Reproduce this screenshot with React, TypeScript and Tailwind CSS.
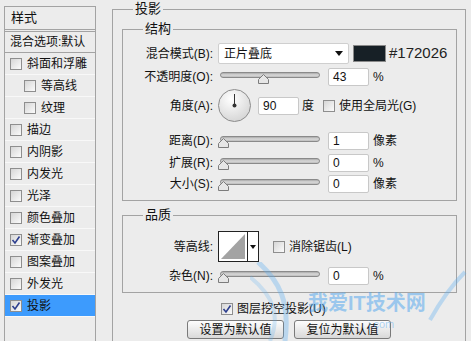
import React from 'react';

const FONT = "font-['Liberation_Sans','Noto_Sans_CJK_SC',sans-serif]";

interface StyleItem {
  label: string;
  indent?: boolean;
  checked?: boolean;
  active?: boolean;
}

const styleItems: StyleItem[] = [
  { label: '斜面和浮雕' },
  { label: '等高线', indent: true },
  { label: '纹理', indent: true },
  { label: '描边' },
  { label: '内阴影' },
  { label: '内发光' },
  { label: '光泽' },
  { label: '颜色叠加' },
  { label: '渐变叠加', checked: true },
  { label: '图案叠加' },
  { label: '外发光' },
  { label: '投影', checked: true, active: true },
];

function CheckBox({ checked = false }: { checked?: boolean }) {
  return (
    <div className="w-[12px] h-[12px] shrink-0 border border-[#8e8e8e] bg-gradient-to-br from-[#d6d6d6] to-[#fbfbfb] flex items-center justify-center">
      {checked && (
        <svg width="10" height="10" viewBox="0 0 10 10">
          <path d="M1.5 5 L4 8 L8.5 1.5" fill="none" stroke="#2d3f8e" strokeWidth="1.6" />
        </svg>
      )}
    </div>
  );
}

function Slider({ value }: { value: number }) {
  return (
    <div className="relative w-[102px] h-[14px] shrink-0">
      <div className="absolute left-[2px] right-0 top-[2px] h-[6px] rounded-full border border-[#8a8a8a] bg-gradient-to-b from-[#a9a9a9] via-[#d9d9d9] to-[#bdbdbd]" />
      {/* thumb */}
      <svg
        className="absolute top-[4px]"
        style={{ left: `${value}px` }}
        width="11"
        height="10"
        viewBox="0 0 11 10"
      >
        <path d="M0.5 9.5 L0.5 5.5 L5.5 0.5 L10.5 5.5 L10.5 9.5 Z" fill="#e6e6e6" stroke="#7c7c7c" />
      </svg>
    </div>
  );
}

function NumInput({ value, w = 'w-[41px]' }: { value: string; w?: string }) {
  return (
    <div className={`${w} h-[18px] shrink-0 bg-white border border-[#c8c8c8] rounded-[2px] flex items-center pl-[4px] text-[12px] text-[#111]`}>
      {value}
    </div>
  );
}

function Label({ children }: { children: React.ReactNode }) {
  return <div className="w-[90px] shrink-0 text-right text-[12px] text-[#111] whitespace-nowrap">{children}</div>;
}

function Group({ title, className, children }: { title: string; className?: string; children: React.ReactNode }) {
  return (
    <div className={`relative border border-[#a3a3a3] ${className ?? ''}`}>
      <span className="absolute -top-[9px] left-[20px] bg-[#ececec] px-[2px] text-[13px] leading-[16px] text-[#111]">{title}</span>
      {children}
    </div>
  );
}

function Button({ children }: { children: React.ReactNode }) {
  return (
    <div className="w-[97px] h-[19px] border border-[#7a7a7a] rounded-[3px] bg-gradient-to-b from-[#fdfdfd] to-[#d9d9d9] flex items-center justify-center text-[12px] text-[#111]">
      {children}
    </div>
  );
}

export default function App() {
  return (
    <div className={`relative w-[471px] h-[341px] overflow-hidden bg-[#ececec] flex items-start ${FONT}`}>
      {/* style list */}
      <div className="ml-[4px] mt-[6px] w-[92px] h-[340px] border border-[#a3a3a3] shrink-0">
        <div className="h-[23px] border-b border-[#a3a3a3] pl-[6px] flex items-center text-[13px] text-[#111]">样式</div>
        <div className="mt-[1px] h-[22px] border-t border-b border-[#a3a3a3] pl-[5px] flex items-center text-[12px] text-[#111] whitespace-nowrap">
          混合选项:默认
        </div>
        {styleItems.map((it) => (
          <div
            key={it.label}
            className={`h-[22px] flex items-center gap-[5px] border-b border-[#f8f8f8] text-[12px] text-[#111] ${it.indent ? 'pl-[19px]' : 'pl-[5px]'} ${it.active ? 'bg-[#3d9bfd]' : ''}`}
          >
            <CheckBox checked={it.checked} />
            <span>{it.label}</span>
          </div>
        ))}
      </div>

      {/* drop shadow settings */}
      <Group title="投影" className="ml-[16px] mt-[9px] w-[354px] h-[340px] pt-[19px] pl-[9px]">
        <Group title="结构" className="w-[335px] h-[172px] flex flex-col">
          <div className="mt-[13px] h-[21px] flex items-center">
            <Label>混合模式(B):</Label>
            <div className="ml-[5px] w-[131px] h-[21px] bg-white border border-[#cfcfcf] rounded-[2px] flex items-center justify-between pl-[5px] pr-[5px] text-[12px] text-[#111]">
              <span>正片叠底</span>
              <svg width="8" height="5" viewBox="0 0 8 5">
                <path d="M0 0 L8 0 L4 5 Z" fill="#111" />
              </svg>
            </div>
            <div className="ml-[4px] w-[33px] h-[17px] border border-[#8a8a8a] bg-[#172026]" />
            <span className="ml-[3px] font-['Liberation_Sans',sans-serif] text-[15px] text-[#222]">#172026</span>
          </div>
          <div className="mt-[2px] h-[22px] flex items-center">
            <Label>不透明度(O):</Label>
            <div className="ml-[5px]"><Slider value={40} /></div>
            <div className="ml-[8px]"><NumInput value="43" /></div>
            <span className="ml-[4px] text-[12px] text-[#111]">%</span>
          </div>
          <div className="mt-[1px] h-[33px] flex items-center">
            <Label>角度(A):</Label>
            <svg className="ml-[5px] shrink-0" width="33" height="33" viewBox="0 0 33 33">
              <defs>
                <radialGradient id="dial" cx="40%" cy="30%" r="75%">
                  <stop offset="0%" stopColor="#ffffff" />
                  <stop offset="100%" stopColor="#d4d4d4" />
                </radialGradient>
              </defs>
              <circle cx="16.5" cy="16.5" r="16" fill="url(#dial)" stroke="#8c8c8c" />
              <line x1="16.5" y1="16.5" x2="16.5" y2="5" stroke="#333" strokeWidth="1" />
              <circle cx="16.5" cy="16.5" r="2" fill="#333" />
            </svg>
            <div className="ml-[7px]"><NumInput value="90" /></div>
            <span className="ml-[3px] text-[12px] text-[#111]">度</span>
            <div className="ml-[9px] flex items-center gap-[4px] text-[12px] text-[#111] whitespace-nowrap">
              <CheckBox />
              <span>使用全局光(G)</span>
            </div>
          </div>
          <div className="mt-[8px] h-[22px] flex items-center">
            <Label>距离(D):</Label>
            <div className="ml-[5px]"><Slider value={0} /></div>
            <div className="ml-[8px]"><NumInput value="1" /></div>
            <span className="ml-[4px] text-[12px] text-[#111]">像素</span>
          </div>
          <div className="h-[21px] flex items-center">
            <Label>扩展(R):</Label>
            <div className="ml-[5px]"><Slider value={0} /></div>
            <div className="ml-[8px]"><NumInput value="0" /></div>
            <span className="ml-[4px] text-[12px] text-[#111]">%</span>
          </div>
          <div className="h-[22px] flex items-center">
            <Label>大小(S):</Label>
            <div className="ml-[5px]"><Slider value={0} /></div>
            <div className="ml-[8px]"><NumInput value="0" /></div>
            <span className="ml-[4px] text-[12px] text-[#111]">像素</span>
          </div>
        </Group>

        <Group title="品质" className="mt-[14px] w-[335px] h-[78px] flex flex-col">
          <div className="mt-[15px] h-[31px] flex items-center">
            <Label>等高线:</Label>
            <div className="ml-[5px] w-[41px] h-[31px] border border-[#222] bg-white flex">
              <svg width="28" height="29" viewBox="0 0 28 29" className="shrink-0">
                <path d="M2 27 L26 2 L26 27 Z" fill="#a3a3a3" />
              </svg>
              <div className="w-[11px] h-full border-l border-[#222] flex items-center justify-center">
                <svg width="6" height="4" viewBox="0 0 6 4">
                  <path d="M0 0 L6 0 L3 4 Z" fill="#111" />
                </svg>
              </div>
            </div>
            <div className="ml-[14px] flex items-center gap-[4px] text-[12px] text-[#111] whitespace-nowrap">
              <CheckBox />
              <span>消除锯齿(L)</span>
            </div>
          </div>
          <div className="mt-[5px] h-[18px] flex items-center">
            <Label>杂色(N):</Label>
            <div className="ml-[5px]"><Slider value={0} /></div>
            <div className="ml-[8px]"><NumInput value="0" /></div>
            <span className="ml-[4px] text-[12px] text-[#111]">%</span>
          </div>
        </Group>

        <div className="mt-[7px] ml-[99px] flex items-center gap-[4px] text-[12px] text-[#111] whitespace-nowrap">
          <CheckBox checked />
          <span>图层挖空投影(U)</span>
        </div>
        <div className="mt-[2px] ml-[65px] flex gap-[10px]">
          <Button>设置为默认值</Button>
          <Button>复位为默认值</Button>
        </div>
      </Group>

      {/* watermark */}
      <div className="absolute left-[250px] top-[262px] w-[221px] h-[79px] pointer-events-none">
        <svg className="absolute inset-0" width="221" height="79" viewBox="0 0 221 79">
          <path d="M8 0 C30 20 40 40 35 79" fill="none" stroke="#5fb0f0" strokeOpacity="0.35" strokeWidth="5" />
          <path d="M0 15 C25 35 30 55 20 79" fill="none" stroke="#5fb0f0" strokeOpacity="0.25" strokeWidth="4" />
          <path d="M215 10 C200 25 190 40 180 58" fill="none" stroke="#5fb0f0" strokeOpacity="0.35" strokeWidth="4" />
        </svg>
        <span className="absolute left-[58px] top-[30px] text-[20px] font-bold leading-[22px] text-[#4aa3ee]/50 whitespace-nowrap">我爱IT技术网</span>
        <span className="absolute left-[118px] top-[56px] text-[11px] leading-[12px] text-[#4aa3ee]/45">j.com</span>
      </div>
    </div>
  );
}
